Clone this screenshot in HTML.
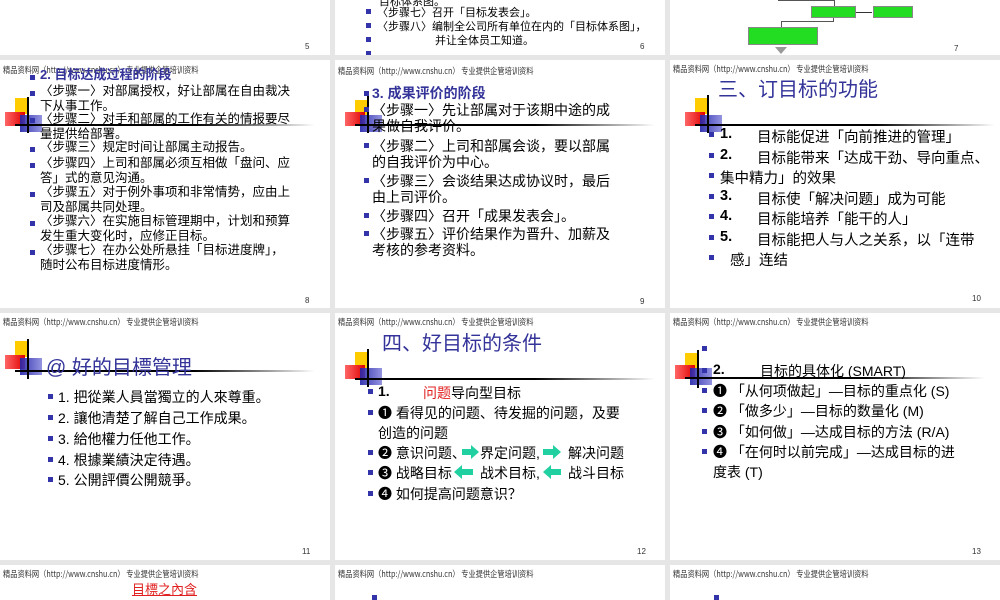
<!DOCTYPE html>
<html><head><meta charset="utf-8">
<style>
*{margin:0;padding:0;box-sizing:border-box}
body{width:1000px;height:600px;background:#e6e6e6;position:relative;overflow:hidden;font-family:"Liberation Sans","Noto Sans CJK SC",sans-serif;color:#000}
.s{position:absolute;background:#fff;overflow:hidden}
.hd{position:absolute;left:3px;top:3px;font-size:8.5px;color:#333;white-space:nowrap;transform:scaleX(.85);transform-origin:left top;font-family:"WenQuanYi Zen Hei","Noto Sans CJK SC",sans-serif}
.pn{position:absolute;font-size:8px;color:#333}
.t{position:absolute;white-space:nowrap}
.b{position:absolute;width:5px;height:5px;background:#3333aa}
.dy{position:absolute;background:#ffcc00;width:14px;height:16px}
.dr{position:absolute;background:linear-gradient(90deg,#ff6666,#e00000);width:20px;height:14px}
.db{position:absolute;background:linear-gradient(90deg,#2222aa,#8888dd);width:22px;height:17px;opacity:.9}
.dv{position:absolute;width:1.5px;background:#000}
.dh{position:absolute;height:1.5px;background:linear-gradient(90deg,#000 60%,rgba(0,0,0,0))}
.ti{color:#333399}
.g{position:absolute;background:#22dd22;border:1px solid #888}
</style></head><body>

<!-- Row 1 -->
<div class="s" style="left:0;top:0;width:330px;height:55px">
 <div class="pn" style="left:305px;top:42px">5</div>
</div>
<div class="s" style="left:335px;top:0;width:330px;height:55px;font-size:11px">
 <div class="t" style="left:44px;top:-7px">目标体系图。</div>
 <div class="b" style="left:31px;top:9px"></div><div class="t" style="left:42px;top:4px">〈步骤七〉召开「目标发表会」。</div>
 <div class="b" style="left:31px;top:23px"></div><div class="t" style="left:42px;top:18px">〈步骤八〉编制全公司所有单位在内的「目标体系图」，</div>
 <div class="b" style="left:31px;top:37px"></div><div class="t" style="left:100px;top:32px">并让全体员工知道。</div>
 <div class="b" style="left:31px;top:51px"></div>
 <div class="pn" style="left:305px;top:42px">6</div>
</div>
<div class="s" style="left:670px;top:0;width:330px;height:55px">
 <div style="position:absolute;left:108px;top:0;width:56px;height:1px;background:#555"></div>
 <div style="position:absolute;left:164px;top:0;width:1px;height:6px;background:#555"></div>
 <div class="g" style="left:141px;top:6px;width:45px;height:12px"></div>
 <div style="position:absolute;left:186px;top:12px;width:16px;height:1px;background:#333"></div>
 <div class="g" style="left:203px;top:6px;width:40px;height:12px"></div>
 <div style="position:absolute;left:163px;top:18px;width:1px;height:3px;background:#555"></div>
 <div style="position:absolute;left:111px;top:21px;width:53px;height:1px;background:#555"></div>
 <div style="position:absolute;left:111px;top:21px;width:1px;height:6px;background:#555"></div>
 <div class="g" style="left:78px;top:27px;width:70px;height:18px"></div>
 <div style="position:absolute;left:105px;top:47px;width:0;height:0;border-left:6px solid transparent;border-right:6px solid transparent;border-top:7px solid #999"></div>
 <div class="pn" style="left:284px;top:44px">7</div>
</div>

<!-- Row 2 -->
<div class="s" style="left:0;top:60px;width:330px;height:248px;font-size:12.5px;line-height:14.5px">
 <div class="hd">精品资料网（http://www.cnshu.cn） 专业提供企管培训资料</div>
 <div class="dy" style="left:15px;top:38px"></div><div class="dr" style="left:5px;top:52px"></div><div class="db" style="left:20px;top:55px"></div>
 <div class="dv" style="left:27px;top:37px;height:36px"></div><div class="dh" style="left:15px;top:64px;width:300px"></div>
 <div class="b" style="left:30px;top:15px"></div><div class="t ti" style="left:40px;top:8px;font-weight:bold;font-size:13px">2. 目标达成过程的阶段</div>
 <div class="b" style="left:30px;top:31px"></div><div class="t" style="left:40px;top:24px">〈步骤一〉对部属授权，好让部属在自由裁决<br>下从事工作。</div>
 <div class="b" style="left:30px;top:58px"></div><div class="t" style="left:40px;top:52px">〈步骤二〉对手和部属的工作有关的情报要尽<br>量提供给部署。</div>
 <div class="b" style="left:30px;top:87px"></div><div class="t" style="left:40px;top:80px">〈步骤三〉规定时间让部属主动报告。</div>
 <div class="b" style="left:30px;top:103px"></div><div class="t" style="left:40px;top:96px">〈步骤四〉上司和部属必须互相做「盘问、应<br>答」式的意见沟通。</div>
 <div class="b" style="left:30px;top:132px"></div><div class="t" style="left:40px;top:125px">〈步骤五〉对于例外事项和非常情势，应由上<br>司及部属共同处理。</div>
 <div class="b" style="left:30px;top:161px"></div><div class="t" style="left:40px;top:154px">〈步骤六〉在实施目标管理期中，计划和预算<br>发生重大变化时，应修正目标。</div>
 <div class="b" style="left:30px;top:190px"></div><div class="t" style="left:40px;top:183px">〈步骤七〉在办公处所悬挂「目标进度牌」，<br>随时公布目标进度情形。</div>
 <div class="pn" style="left:305px;top:234px">8</div>
</div>
<div class="s" style="left:335px;top:60px;width:330px;height:248px;font-size:14px;line-height:16px">
 <div class="hd">精品资料网（http://www.cnshu.cn） 专业提供企管培训资料</div>
 <div class="dy" style="left:20px;top:40px"></div><div class="dr" style="left:10px;top:52px"></div><div class="db" style="left:25px;top:55px"></div>
 <div class="dv" style="left:32px;top:35px;height:38px"></div><div class="dh" style="left:20px;top:64px;width:300px"></div>
 <div class="b" style="left:29px;top:31px"></div><div class="t ti" style="left:37px;top:25px;font-weight:bold">3. 成果评价的阶段</div>
 <div class="b" style="left:29px;top:47px"></div><div class="t" style="left:37px;top:42px">〈步骤一〉先让部属对于该期中途的成<br>果做自我评价。</div>
 <div class="b" style="left:29px;top:83px"></div><div class="t" style="left:37px;top:78px">〈步骤二〉上司和部属会谈，要以部属<br>的自我评价为中心。</div>
 <div class="b" style="left:29px;top:118px"></div><div class="t" style="left:37px;top:113px">〈步骤三〉会谈结果达成协议时，最后<br>由上司评价。</div>
 <div class="b" style="left:29px;top:153px"></div><div class="t" style="left:37px;top:148px">〈步骤四〉召开「成果发表会」。</div>
 <div class="b" style="left:29px;top:171px"></div><div class="t" style="left:37px;top:166px">〈步骤五〉评价结果作为晋升、加薪及<br>考核的参考资料。</div>
 <div class="pn" style="left:305px;top:234px">9</div>
</div>
<div class="s" style="left:670px;top:60px;width:330px;height:248px;font-size:14.5px">
 <div class="hd">精品资料网（http://www.cnshu.cn） 专业提供企管培训资料</div>
 <div class="t ti" style="left:48px;top:13px;font-size:20px">三、订目标的功能</div>
 <div class="dy" style="left:25px;top:38px"></div><div class="dr" style="left:15px;top:52px"></div><div class="db" style="left:30px;top:55px"></div>
 <div class="dv" style="left:37px;top:35px;height:38px"></div><div class="dh" style="left:25px;top:64px;width:300px"></div>
 <div class="b" style="left:39px;top:72px"></div><div class="t" style="left:50px;top:66px"><b>1.</b></div><div class="t" style="left:87px;top:66px">目标能促进「向前推进的管理」</div>
 <div class="b" style="left:39px;top:93px"></div><div class="t" style="left:50px;top:87px"><b>2.</b></div><div class="t" style="left:87px;top:87px">目标能带来「达成干劲、导向重点、</div>
 <div class="b" style="left:39px;top:113px"></div><div class="t" style="left:50px;top:107px">集中精力」的效果</div>
 <div class="b" style="left:39px;top:134px"></div><div class="t" style="left:50px;top:128px"><b>3.</b></div><div class="t" style="left:87px;top:128px">目标使「解决问题」成为可能</div>
 <div class="b" style="left:39px;top:154px"></div><div class="t" style="left:50px;top:148px"><b>4.</b></div><div class="t" style="left:87px;top:148px">目标能培养「能干的人」</div>
 <div class="b" style="left:39px;top:175px"></div><div class="t" style="left:50px;top:169px"><b>5.</b></div><div class="t" style="left:87px;top:169px">目标能把人与人之关系，以「连带</div>
 <div class="b" style="left:39px;top:195px"></div><div class="t" style="left:60px;top:189px">感」连结</div>
 <div class="pn" style="left:302px;top:234px">10</div>
</div>

<!-- Row 3 -->
<div class="s" style="left:0;top:313px;width:330px;height:247px;font-size:14px">
 <div class="hd">精品资料网（http://www.cnshu.cn） 专业提供企管培训资料</div>
 <div class="dy" style="left:15px;top:28px"></div><div class="dr" style="left:5px;top:42px"></div><div class="db" style="left:20px;top:45px"></div>
 <div class="dv" style="left:27px;top:26px;height:40px"></div><div class="dh" style="left:15px;top:57px;width:300px"></div>
 <div class="t ti" style="left:46px;top:38px;font-size:20px;color:#333399">@ 好的目標管理</div>
 <div class="b" style="left:48px;top:81px"></div><div class="t" style="left:58px;top:74px">1. 把從業人員當獨立的人來尊重。</div>
 <div class="b" style="left:48px;top:102px"></div><div class="t" style="left:58px;top:95px">2. 讓他清楚了解自己工作成果。</div>
 <div class="b" style="left:48px;top:123px"></div><div class="t" style="left:58px;top:116px">3. 給他權力任他工作。</div>
 <div class="b" style="left:48px;top:144px"></div><div class="t" style="left:58px;top:137px">4. 根據業績決定待遇。</div>
 <div class="b" style="left:48px;top:164px"></div><div class="t" style="left:58px;top:157px">5. 公開評價公開競爭。</div>
 <div class="pn" style="left:302px;top:234px">11</div>
</div>
<div class="s" style="left:335px;top:313px;width:330px;height:247px;font-size:14px">
 <div class="hd">精品资料网（http://www.cnshu.cn） 专业提供企管培训资料</div>
 <div class="t ti" style="left:47px;top:14px;font-size:20px">四、好目标的条件</div>
 <div class="dy" style="left:20px;top:39px"></div><div class="dr" style="left:10px;top:52px"></div><div class="db" style="left:25px;top:55px"></div>
 <div class="dv" style="left:32px;top:36px;height:38px"></div><div class="dh" style="left:20px;top:65px;width:300px"></div>
 <div class="b" style="left:33px;top:76px"></div><div class="t" style="left:43px;top:70px"><b>1.</b></div><div class="t" style="left:88px;top:70px"><span style="color:#e02020">问题</span>导向型目标</div>
 <div class="b" style="left:33px;top:97px"></div><div class="t" style="left:43px;top:90px">❶ 看得见的问题、待发掘的问题，及要<br>创造的问题</div>
 <div class="b" style="left:33px;top:137px"></div><div class="t" style="left:43px;top:130px">❷ 意识问题、</div><div class="t" style="left:145px;top:130px">界定问题,</div><div class="t" style="left:233px;top:130px">解决问题</div>
 <div class="b" style="left:33px;top:157px"></div><div class="t" style="left:43px;top:150px">❸ 战略目标</div><div class="t" style="left:145px;top:150px">战术目标,</div><div class="t" style="left:233px;top:150px">战斗目标</div>
 <div class="b" style="left:33px;top:178px"></div><div class="t" style="left:43px;top:171px">❹ 如何提高问题意识？</div>
 <svg style="position:absolute;left:0;top:0" width="330" height="247">
  <g fill="#20d0a0"><polygon points="127,136 136,136 136,132 144,139 136,146 136,142 127,142"/>
  <polygon points="208,136 218,136 218,132 226,139 218,146 218,142 208,142"/>
  <polygon points="138,156 127,156 127,152 119,159 127,166 127,162 138,162"/>
  <polygon points="226,156 216,156 216,152 208,159 216,166 216,162 226,162"/></g>
 </svg>
 <div class="pn" style="left:302px;top:234px">12</div>
</div>
<div class="s" style="left:670px;top:313px;width:330px;height:247px;font-size:14px">
 <div class="hd">精品资料网（http://www.cnshu.cn） 专业提供企管培训资料</div>
 <div class="dy" style="left:15px;top:40px"></div><div class="dr" style="left:5px;top:52px"></div><div class="db" style="left:20px;top:55px"></div>
 <div class="dv" style="left:27px;top:37px;height:38px"></div><div class="dh" style="left:15px;top:64px;width:300px"></div>
 <div class="b" style="left:32px;top:33px"></div>
 <div class="b" style="left:32px;top:55px"></div><div class="t" style="left:43px;top:48px"><b>2.</b></div><div class="t" style="left:90px;top:48px">目标的具体化 (SMART)</div>
 <div class="b" style="left:32px;top:75px"></div><div class="t" style="left:43px;top:68px">❶ 「从何项做起」—目标的重点化 (S)</div>
 <div class="b" style="left:32px;top:95px"></div><div class="t" style="left:43px;top:88px">❷ 「做多少」—目标的数量化 (M)</div>
 <div class="b" style="left:32px;top:116px"></div><div class="t" style="left:43px;top:109px">❸ 「如何做」—达成目标的方法 (R/A)</div>
 <div class="b" style="left:32px;top:136px"></div><div class="t" style="left:43px;top:129px">❹ 「在何时以前完成」—达成目标的进<br>度表 (T)</div>
 <div class="pn" style="left:302px;top:234px">13</div>
</div>

<!-- Row 4 -->
<div class="s" style="left:0;top:565px;width:330px;height:35px">
 <div class="hd">精品资料网（http://www.cnshu.cn） 专业提供企管培训资料</div>
 <div class="t" style="left:132px;top:14px;font-size:13px;color:#e02020;text-decoration:underline">目標之內含</div>
</div>
<div class="s" style="left:335px;top:565px;width:330px;height:35px">
 <div class="hd">精品资料网（http://www.cnshu.cn） 专业提供企管培训资料</div>
 <div class="b" style="left:37px;top:30px"></div>
</div>
<div class="s" style="left:670px;top:565px;width:330px;height:35px">
 <div class="hd">精品资料网（http://www.cnshu.cn） 专业提供企管培训资料</div>
 <div class="b" style="left:44px;top:30px"></div>
</div>
</body></html>
